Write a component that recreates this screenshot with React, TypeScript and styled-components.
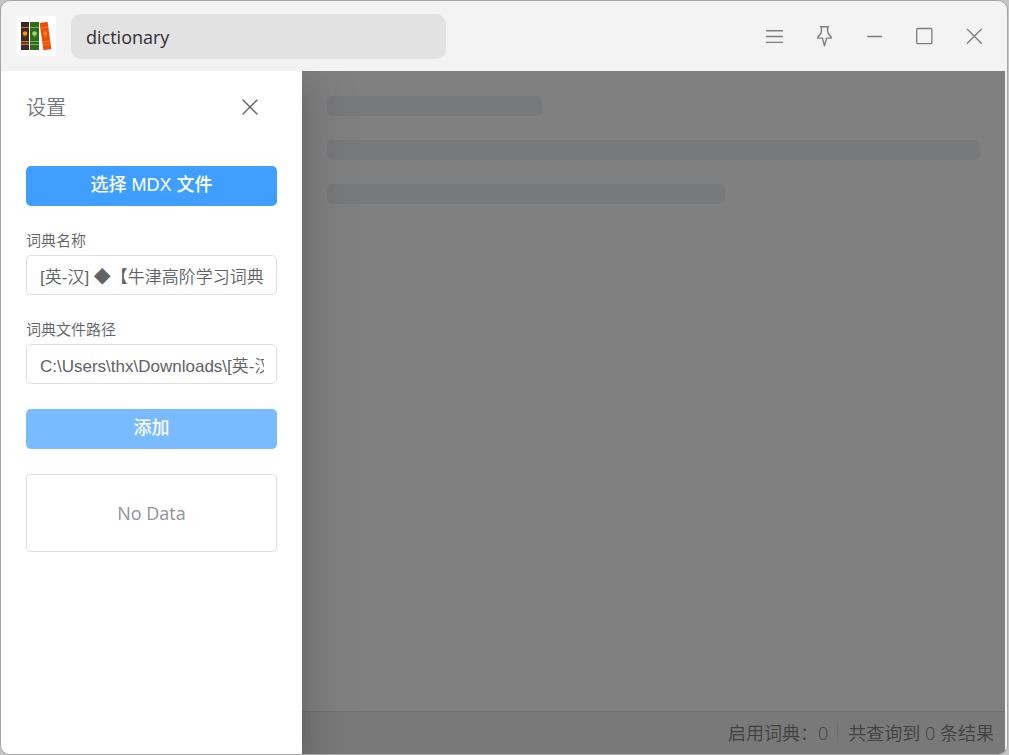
import React, { useState } from "react";
import styled, { createGlobalStyle } from "styled-components";

const uiFont = `"Open Sans", "Noto Sans CJK SC", sans-serif`;
const controlFont = `"Liberation Sans", "DejaVu Sans", "Noto Sans CJK SC", sans-serif`;

const GlobalStyle = createGlobalStyle`
  *, *::before, *::after { box-sizing: border-box; }
  html, body, #root { height: 100%; }
  body { margin: 0; background: #c4c4c4; font-family: ${uiFont}; overflow: hidden; }
`;

const Frame = styled.div`
  height: 100vh;
  padding-right: 1px;
`;

const AppWindow = styled.div`
  height: 100%;
  display: flex;
  flex-direction: column;
  border: 1px solid #a6a6a6;
  border-radius: 10px;
  background: #f3f3f3;
  overflow: hidden;
`;

const TitleBar = styled.header`
  flex: none;
  height: 70px;
  display: flex;
  align-items: center;
  gap: 15px;
  padding: 0 8px 0 15px;
`;

const Logo = styled.svg`
  flex: none;
  width: 40px;
  height: 40px;
`;

const SearchInput = styled.input`
  width: 375px;
  min-width: 0;
  height: 45px;
  padding: 2px 15px 0;
  border: 0;
  border-radius: 10px;
  outline: none;
  background: #e2e2e2;
  color: #303133;
  font: 18px/28px ${uiFont};
`;

const WindowControls = styled.div`
  margin-left: auto;
  display: flex;
`;

const IconButton = styled.button`
  display: flex;
  align-items: center;
  justify-content: center;
  width: 50px;
  height: 50px;
  padding: 0;
  border: 0;
  background: transparent;
  color: #7e7e7e;
`;

const Icon = styled.svg`
  width: 24px;
  height: 24px;
  fill: none;
  stroke: currentColor;
`;

const Body = styled.div`
  flex: 1;
  min-height: 0;
  display: flex;
  padding-right: 2px;
  overflow: hidden;
`;

const Drawer = styled.aside`
  flex: none;
  z-index: 1;
  width: 301px;
  padding: 0 25px;
  background: #ffffff;
  box-shadow: 0 16px 48px 16px rgba(0, 0, 0, 0.08), 0 12px 32px rgba(0, 0, 0, 0.12), 0 8px 16px -8px rgba(0, 0, 0, 0.16);
`;

const DrawerHeader = styled.div`
  display: flex;
  align-items: center;
  justify-content: space-between;
  height: 71px;
  margin-bottom: 24px;
`;

const DrawerTitle = styled.h2`
  margin: 0;
  padding-top: 3px;
  color: #72767b;
  font-size: 20px;
  font-weight: 350;
  line-height: 28px;
`;

const CloseButton = styled(IconButton)`
  width: 24px;
  height: 24px;
  margin-right: 15px;
  color: #5f6368;
`;

const Form = styled.form`
  display: flex;
  flex-direction: column;
`;

const PrimaryButton = styled.button`
  height: 40px;
  padding: 0 0 3px;
  border: 0;
  border-radius: 5px;
  background: #409eff;
  color: #ffffff;
  font: 500 18px/26px ${controlFont};

  &:disabled { background: #79bbff; }
`;

const Field = styled.div`
  display: flex;
  flex-direction: column;
  gap: 4px;
  margin: 24px 0 0;

  & + ${PrimaryButton} { margin-top: 25px; }
`;

const FieldLabel = styled.label`
  color: #606266;
  font-size: 15px;
  font-weight: 350;
  line-height: 21px;
`;

const TextInput = styled.input`
  width: 100%;
  height: 40px;
  padding: 0 12px 0 13px;
  border: 1px solid #dcdfe6;
  border-radius: 5px;
  outline: none;
  background: #ffffff;
  color: #606266;
  font-family: ${controlFont};
  font-size: 17px;
  font-weight: 350;
`;

const EmptyList = styled.div`
  display: flex;
  align-items: center;
  justify-content: center;
  height: 78px;
  margin-top: 25px;
  border: 1px solid #dcdfe6;
  border-radius: 4px;
  color: #909399;
  font-size: 18px;
`;

const Main = styled.main`
  flex: 1;
  min-width: 0;
  display: flex;
  flex-direction: column;
  background: #808080;
`;

const Results = styled.div`
  flex: 1;
  display: flex;
  flex-direction: column;
  gap: 24px;
  padding: 25px;
`;

const SkeletonLine = styled.div<{ $width: string }>`
  width: ${({ $width }) => $width};
  height: 20px;
  border-radius: 5px;
  background: #78797b;
`;

const StatusBar = styled.footer`
  flex: none;
  display: flex;
  align-items: center;
  justify-content: flex-end;
  height: 43px;
  padding: 0 11px;
  border-top: 1px solid #727272;
  background: #797979;
  color: #404040;
  font-size: 18px;
  font-weight: 350;
  line-height: 26px;
  white-space: nowrap;
`;

const StatusItem = styled.span`
  & + & {
    margin-left: 9px;
    padding-left: 10px;
    border-left: 1px solid #6e6e6e;
    line-height: 20px;
  }
`;

function BooksLogo() {
  return (
    <Logo viewBox="0 0 40 40" role="img" aria-label="Books">
      <rect width="40" height="40" fill="#fff" />
      <g>
        <rect x="5" y="6" width="8" height="28" fill="#3e2528" />
        <path d="M5 11.5h8M5 25.5h8M5 28.5h8" stroke="#b97734" />
        <path d="M5 27h8" stroke="#87532f" />
        <circle cx="9" cy="17.5" r="2.3" fill="#ff9100" />
        <path d="M7.5 20.8h3" stroke="#74401c" />
      </g>
      <g>
        <rect x="14" y="6" width="9" height="28" fill="#2e6d1e" />
        <path d="M14 11.5h9M14 25.5h9M14 28.5h9" stroke="#7ead52" />
        <circle cx="18.5" cy="17.5" r="2.3" fill="#a4d66f" />
        <path d="M17 20.8h3" stroke="#5d9544" />
      </g>
      <g transform="rotate(-8 29.5 20)">
        <rect x="25.5" y="6.2" width="8" height="27.6" fill="#ea4f08" />
        <path d="M25.5 11.5h8M25.5 25.5h8M25.5 28.5h8" stroke="#ff792d" />
        <circle cx="29.5" cy="17.5" r="2.2" fill="#ff792d" />
        <path d="M28 21h3" stroke="#f56a22" />
      </g>
    </Logo>
  );
}

export default function App() {
  const [query, setQuery] = useState("dictionary");
  const [name, setName] = useState("[英-汉] ◆【牛津高阶学习词典");
  const [path, setPath] = useState("C:\\Users\\thx\\Downloads\\[英-汉] ◆【牛津高阶学习词典");

  return (
    <Frame>
      <GlobalStyle />
      <AppWindow>
        <TitleBar>
          <BooksLogo />
          <SearchInput aria-label="Search" value={query} onChange={(e) => setQuery(e.target.value)} />
          <WindowControls>
            <IconButton aria-label="Menu">
              <Icon viewBox="0 0 24 24"><path d="M4.5 6.7h16M4.5 12.5h16M4.5 18.4h16" strokeWidth="1.4" strokeLinecap="round" /></Icon>
            </IconButton>
            <IconButton aria-label="Pin">
              <Icon viewBox="0 0 24 24">
                <path d="M8.4 2.8h8.2M9.4 3v4.2c0 2.2-1.2 3.6-2.8 4.9-.6.5-.9 1.2-.9 2h4.7l2.1 7.6 2.1-7.6h4.7c0-.8-.3-1.5-.9-2-1.6-1.3-2.8-2.7-2.8-4.9V3" strokeWidth="1.4" strokeLinejoin="round" strokeLinecap="round" />
              </Icon>
            </IconButton>
            <IconButton aria-label="Minimize">
              <Icon viewBox="0 0 24 24"><path d="M5.8 12.5h13.6" strokeWidth="1.4" strokeLinecap="round" /></Icon>
            </IconButton>
            <IconButton aria-label="Maximize">
              <Icon viewBox="0 0 24 24"><rect x="4.7" y="4.5" width="15.2" height="15.2" rx="1" strokeWidth="1.3" /></Icon>
            </IconButton>
            <IconButton aria-label="Close">
              <Icon viewBox="0 0 24 24"><path d="M5.3 5.2l14 14M19.3 5.2l-14 14" strokeWidth="1.3" strokeLinecap="round" /></Icon>
            </IconButton>
          </WindowControls>
        </TitleBar>

        <Body>
          <Drawer>
            <DrawerHeader>
              <DrawerTitle>设置</DrawerTitle>
              <CloseButton aria-label="Close settings">
                <Icon viewBox="0 0 24 24"><path d="M5 5l14 14M19 5L5 19" strokeWidth="1.4" strokeLinecap="round" /></Icon>
              </CloseButton>
            </DrawerHeader>
            <Form onSubmit={(e) => e.preventDefault()}>
              <PrimaryButton type="button">选择 MDX 文件</PrimaryButton>
              <Field>
                <FieldLabel htmlFor="dict-name">词典名称</FieldLabel>
                <TextInput id="dict-name" value={name} onChange={(e) => setName(e.target.value)} />
              </Field>
              <Field>
                <FieldLabel htmlFor="dict-path">词典文件路径</FieldLabel>
                <TextInput id="dict-path" value={path} onChange={(e) => setPath(e.target.value)} />
              </Field>
              <PrimaryButton type="submit" disabled>添加</PrimaryButton>
            </Form>
            <EmptyList>No Data</EmptyList>
          </Drawer>

          <Main>
            <Results>
              <SkeletonLine $width="33%" />
              <SkeletonLine $width="100%" />
              <SkeletonLine $width="61%" />
            </Results>
            <StatusBar>
              <StatusItem>启用词典：0</StatusItem>
              <StatusItem>共查询到 0 条结果</StatusItem>
            </StatusBar>
          </Main>
        </Body>
      </AppWindow>
    </Frame>
  );
}
